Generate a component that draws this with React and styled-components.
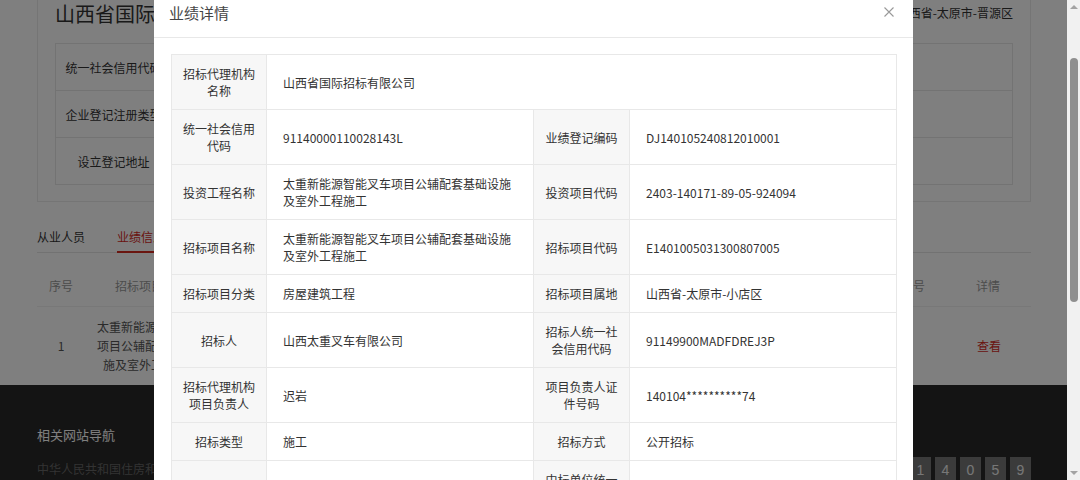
import React from 'react';
import styled, { createGlobalStyle } from 'styled-components';

const GlobalStyle = createGlobalStyle`
  html, body {
    margin: 0;
    padding: 0;
  }
  body {
    font-family: "Noto Sans CJK SC", "Noto Sans", sans-serif;
    color: #333;
    background: #fff;
  }
  * {
    box-sizing: border-box;
  }
`;

const infoRows = [
  { label: '统一社会信用代码', value: '91140000110028143L' },
  { label: '企业登记注册类型', value: '有限责任公司' },
  { label: '设立登记地址', value: '山西省太原市晋源区' }
];

const listColumns = [
  { key: 'no', title: '序号', width: 48 },
  { key: 'name', title: '招标项目名称', width: 132 },
  { key: 'code', title: '招标项目编号', width: 212 },
  { key: 'winner', title: '中标单位', width: 212 },
  { key: 'amount', title: '中标金额(万元)', width: 210 },
  { key: 'reg', title: '业绩登记编号', width: 76 },
  { key: 'op', title: '详情', width: 104 }
];

const listRows = [
  {
    no: '1',
    name: '太重新能源智能叉车项目公辅配套基础设施及室外工程施工',
    code: 'E1401005031300807005',
    winner: '山西太重叉车有限公司',
    amount: '—',
    reg: '—'
  }
];

const details = [
  [{ label: '招标代理机构名称', value: '山西省国际招标有限公司', span: 3 }],
  [
    { label: '统一社会信用代码', value: '91140000110028143L' },
    { label: '业绩登记编码', value: 'DJ140105240812010001' }
  ],
  [
    { label: '投资工程名称', value: '太重新能源智能叉车项目公辅配套基础设施及室外工程施工' },
    { label: '投资项目代码', value: '2403-140171-89-05-924094' }
  ],
  [
    { label: '招标项目名称', value: '太重新能源智能叉车项目公辅配套基础设施及室外工程施工' },
    { label: '招标项目代码', value: 'E1401005031300807005' }
  ],
  [
    { label: '招标项目分类', value: '房屋建筑工程' },
    { label: '招标项目属地', value: '山西省-太原市-小店区' }
  ],
  [
    { label: '招标人', value: '山西太重叉车有限公司' },
    { label: '招标人统一社会信用代码', value: '91149900MADFDREJ3P' }
  ],
  [
    { label: '招标代理机构项目负责人', value: '迟岩' },
    { label: '项目负责人证件号码', value: '140104**********74' }
  ],
  [
    { label: '招标类型', value: '施工' },
    { label: '招标方式', value: '公开招标' }
  ],
  [
    { label: '中标单位名称', value: '' },
    { label: '中标单位统一社会信用代码', value: '' }
  ]
];

const counter = ['0', '0', '0', '1', '4', '0', '5', '9'];

export default class App extends React.Component {
  render() {
    return (
      <Screen>
        <GlobalStyle />
        <Viewport>
          <Page>
            <Main>
              <Card>
                <CardHead>
                  <CompanyName>山西省国际招标有限公司</CompanyName>
                  <Location>山西省-太原市-晋源区</Location>
                </CardHead>
                <InfoTable>
                  <tbody>
                    {infoRows.map(row => (
                      <tr key={row.label}>
                        <InfoLabel>{row.label}</InfoLabel>
                        <InfoValue>{row.value}</InfoValue>
                      </tr>
                    ))}
                  </tbody>
                </InfoTable>
              </Card>

              <TabBar>
                <Tab>从业人员</Tab>
                <Tab active>业绩信息</Tab>
              </TabBar>

              <ListTable>
                <colgroup>
                  {listColumns.map(col => (
                    <col key={col.key} style={{ width: col.width }} />
                  ))}
                </colgroup>
                <thead>
                  <tr>
                    {listColumns.map(col => (
                      <ListHead key={col.key} last={col.key === 'op'}>
                        {col.title}
                      </ListHead>
                    ))}
                  </tr>
                </thead>
                <tbody>
                  {listRows.map(row => (
                    <tr key={row.no}>
                      {listColumns.map(col =>
                        col.key === 'op' ? (
                          <ListCell key={col.key} last>
                            <ViewLink>查看</ViewLink>
                          </ListCell>
                        ) : (
                          <ListCell key={col.key}>{row[col.key]}</ListCell>
                        )
                      )}
                    </tr>
                  ))}
                </tbody>
              </ListTable>
            </Main>

            <Footer>
              <FooterTitle>相关网站导航</FooterTitle>
              <FooterRow>
                <FooterLink>中华人民共和国住房和城乡建设部</FooterLink>
                <Counter>
                  {counter.map((d, i) => (
                    <Digit key={i}>{d}</Digit>
                  ))}
                </Counter>
              </FooterRow>
            </Footer>
          </Page>

          <Overlay />

          <Modal>
            <ModalHead>
              <ModalTitle>业绩详情</ModalTitle>
              <CloseButton>
                <svg width="10" height="10" viewBox="0 0 10 10">
                  <path d="M0.5 0.5 L9.5 9.5 M9.5 0.5 L0.5 9.5" stroke="#999" strokeWidth="1.1" fill="none" />
                </svg>
              </CloseButton>
            </ModalHead>
            <ModalBody>
              <DetailTable>
                <colgroup>
                  <col style={{ width: 95 }} />
                  <col style={{ width: 267 }} />
                  <col style={{ width: 96 }} />
                  <col style={{ width: 267 }} />
                </colgroup>
                <tbody>
                  {details.map((row, i) => (
                    <tr key={i}>
                      {row.map(cell => (
                        <React.Fragment key={cell.label}>
                          <DetailLabel>{cell.label}</DetailLabel>
                          <DetailValue colSpan={cell.span || 1}>{cell.value}</DetailValue>
                        </React.Fragment>
                      ))}
                    </tr>
                  ))}
                </tbody>
              </DetailTable>
            </ModalBody>
          </Modal>
        </Viewport>

        <Scrollbar>
          <ArrowButton>
            <ArrowUp />
          </ArrowButton>
          <Track>
            <Thumb />
          </Track>
          <ArrowButton>
            <ArrowDown />
          </ArrowButton>
        </Scrollbar>
      </Screen>
    );
  }
}

const Screen = styled.div`
  display: flex;
  width: 1080px;
  height: 480px;
  overflow: hidden;
`;

const Viewport = styled.div`
  position: relative;
  flex: 1;
  height: 480px;
  overflow: hidden;
  background: #fff;
`;

const Page = styled.div`
  margin-top: -25px;
`;

const Main = styled.div`
  padding: 0 36px 0 37px;
`;

const Card = styled.div`
  border: 1px solid #eaeaea;
  padding: 24px 17px 16px;
`;

const CardHead = styled.div`
  display: flex;
  justify-content: space-between;
  align-items: center;
  height: 28px;
`;

const CompanyName = styled.div`
  font-size: 20px;
  line-height: 28px;
  color: #333;
`;

const Location = styled.div`
  font-size: 12px;
  line-height: 18px;
  color: #333;
  margin-top: -2px;
`;

const InfoTable = styled.table`
  width: 100%;
  margin-top: 15px;
  border-collapse: collapse;
  table-layout: fixed;
  border: 1px solid #e6e6e6;
`;

const InfoLabel = styled.td`
  width: 116px;
  height: 47px;
  padding: 0 8px;
  text-align: center;
  font-size: 12px;
  color: #333;
  border: 1px solid #e6e6e6;
`;

const InfoValue = styled.td`
  padding: 0 16px;
  font-size: 12px;
  color: #333;
  border: 1px solid #e6e6e6;
`;

const TabBar = styled.div`
  display: flex;
  gap: 32px;
  margin-top: 26px;
  border-bottom: 1px solid #e4e4e4;
`;

const Tab = styled.div`
  font-size: 12px;
  line-height: 18px;
  padding-bottom: 5px;
  margin-bottom: -1px;
  color: ${p => (p.active ? '#d42a1e' : '#333')};
  border-bottom: 2px solid ${p => (p.active ? '#d42a1e' : 'transparent')};
`;

const ListTable = styled.table`
  width: 100%;
  margin-top: 13px;
  border-collapse: collapse;
  table-layout: fixed;
`;

const ListHead = styled.th`
  height: 40px;
  padding: 0 2px 0 ${p => (p.last ? '20px' : '2px')};
  font-size: 12px;
  line-height: 18px;
  font-weight: normal;
  color: #999;
  text-align: center;
  border-bottom: 1px solid #f0f0f0;
`;

const ListCell = styled.td`
  padding: 10px ${p => (p.last ? '0' : '10px')} 11px ${p => (p.last ? '20px' : '10px')};
  font-size: 12px;
  line-height: 19px;
  color: #555;
  text-align: center;
  vertical-align: middle;
  word-break: break-all;
`;

const ViewLink = styled.span`
  color: #d42a1e;
  cursor: pointer;
`;

const Footer = styled.div`
  background: #282828;
  padding: 40px 36px 40px 37px;
`;

const FooterTitle = styled.div`
  font-size: 13px;
  line-height: 20px;
  color: #fff;
`;

const FooterRow = styled.div`
  display: flex;
  justify-content: space-between;
  align-items: flex-start;
  margin-top: 12px;
`;

const FooterLink = styled.div`
  font-size: 12px;
  line-height: 24px;
  color: #666;
`;

const Counter = styled.div`
  display: flex;
  gap: 4px;
`;

const Digit = styled.div`
  width: 21px;
  height: 26px;
  background: #777;
  color: #eee;
  font-family: "Liberation Sans", Arial, sans-serif;
  font-size: 14px;
  line-height: 26px;
  text-align: center;
`;

const Overlay = styled.div`
  position: absolute;
  inset: 0;
  background: rgba(0, 0, 0, 0.5);
`;

const Modal = styled.div`
  position: absolute;
  left: 154px;
  top: -14px;
  width: 759px;
  background: #fff;
`;

const ModalHead = styled.div`
  display: flex;
  justify-content: space-between;
  align-items: center;
  padding: 16px 19px 13px 15px;
  border-bottom: 1px solid #e8e8e8;
`;

const ModalTitle = styled.div`
  font-size: 15px;
  line-height: 22px;
  color: #444;
`;

const CloseButton = styled.div`
  display: flex;
  width: 10px;
  height: 10px;
  margin-top: -3px;
  cursor: pointer;
`;

const ModalBody = styled.div`
  padding: 16px 17px 24px;
`;

const DetailTable = styled.table`
  width: 725px;
  border-collapse: collapse;
  table-layout: fixed;
  border: 1px solid #e8e8e8;
`;

const DetailLabel = styled.td`
  padding: 10px 10px;
  background: #f7f7f7;
  font-size: 12px;
  line-height: 17px;
  color: #333;
  text-align: center;
  vertical-align: middle;
  border: 1px solid #e8e8e8;
`;

const DetailValue = styled.td`
  padding: 10px 16px;
  font-size: 12px;
  line-height: 17px;
  color: #333;
  text-align: left;
  vertical-align: middle;
  border: 1px solid #e8e8e8;
  word-break: break-all;
`;

const Scrollbar = styled.div`
  display: flex;
  flex-direction: column;
  width: 13px;
  height: 480px;
  background: #f1f1f1;
`;

const ArrowButton = styled.div`
  display: flex;
  align-items: center;
  justify-content: center;
  height: 14px;
`;

const ArrowUp = styled.div`
  width: 0;
  height: 0;
  border-left: 4px solid transparent;
  border-right: 4px solid transparent;
  border-bottom: 4px solid #a3a3a3;
`;

const ArrowDown = styled.div`
  width: 0;
  height: 0;
  border-left: 4px solid transparent;
  border-right: 4px solid transparent;
  border-top: 4px solid #a3a3a3;
`;

const Track = styled.div`
  flex: 1;
  display: flex;
  justify-content: center;
`;

const Thumb = styled.div`
  width: 8px;
  height: 244px;
  margin-top: 44px;
  border-radius: 4px;
  background: #8f8f8f;
`;
